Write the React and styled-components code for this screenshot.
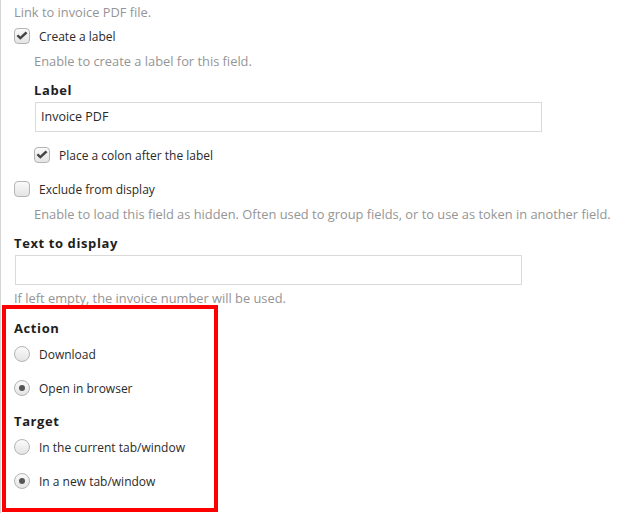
import styled, { createGlobalStyle } from "styled-components";

const GlobalStyle = createGlobalStyle`
	body {
		margin: 0;
		background: #fff;
		font-family: "Open Sans", "Noto Sans", sans-serif;
		font-size: 13px;
		color: #333;
	}
`;

const Panel = styled.div`
	position: relative;
	min-height: 513px;
	border-left: 1px solid #d4d4d4;
	padding: 2px 0 0 13px;
	box-sizing: border-box;
`;

const Help = styled.div`
	line-height: 20px;
	font-size: 12.85px;
	color: #959595;
	margin-top: ${(p) => p.$top || 0}px;
	margin-left: ${(p) => p.$indent || 0}px;
	white-space: nowrap;
`;

const Heading = styled.div`
	line-height: 20px;
	font-weight: 700;
	color: #1e1e1e;
	letter-spacing: 0.6px;
	margin-top: ${(p) => p.$top || 0}px;
`;

const Group = styled.div`
	margin-left: 20px;
`;

const Option = styled.label`
	display: flex;
	align-items: center;
	gap: 9px;
	height: 20px;
	font-size: 12px;
	color: #2a2a2a;
	margin-top: ${(p) => p.$top || 0}px;
`;

const Box = styled.span`
	width: 16px;
	height: 16px;
	box-sizing: border-box;
	border: 1px solid #b4b4b4;
	border-radius: ${(p) => (p.$round ? "50%" : "4px")};
	background: linear-gradient(#fafafa, #e4e4e4);
	display: flex;
	align-items: center;
	justify-content: center;
	flex-shrink: 0;
`;

const Dot = styled.span`
	width: 6px;
	height: 6px;
	border-radius: 50%;
	background: #555;
`;

const TextInput = styled.div`
	margin: 2px 0 0 1px;
	width: 507px;
	height: 30px;
	box-sizing: border-box;
	border: 1px solid #dadada;
	padding: 0 5px;
	line-height: 28px;
	font-size: 12.5px;
	color: #2a2a2a;
`;

const Highlight = styled.div`
	position: absolute;
	left: 1px;
	top: 305px;
	width: 216px;
	height: 207px;
	box-sizing: border-box;
	border: 4px solid #ff0000;
	pointer-events: none;
`;

const Check = ({ checked }) => (
	<Box>
		{checked && (
			<svg width="12" height="10" viewBox="0 0 12 10">
				<path d="M0.5 5 L4.3 8.8 L11.5 2.2 L9.6 0.6 L4.3 5.4 L2.4 3.4 Z" fill="#454545" />
			</svg>
		)}
	</Box>
);

const Radio = ({ checked }) => <Box $round>{checked && <Dot />}</Box>;

const App = () => {
	return (
		<Panel>
			<GlobalStyle />
			<Help>Link to invoice PDF file.</Help>
			<Option $top={4}>
				<Check checked />
				Create a label
			</Option>
			<Group>
				<Help $top={5}>Enable to create a label for this field.</Help>
				<Heading $top={9}>Label</Heading>
				<TextInput>Invoice PDF</TextInput>
				<Option $top={13}>
					<Check checked />
					Place a colon after the label
				</Option>
			</Group>
			<Option $top={14}>
				<Check />
				Exclude from display
			</Option>
			<Help $top={5} $indent={20}>
				Enable to load this field as hidden. Often used to group fields, or to use as token in another field.
			</Help>
			<Heading $top={9}>Text to display</Heading>
			<TextInput />
			<Help $top={3}>If left empty, the invoice number will be used.</Help>
			<Heading $top={10}>Action</Heading>
			<Option $top={6}>
				<Radio />
				Download
			</Option>
			<Option $top={14}>
				<Radio checked />
				Open in browser
			</Option>
			<Heading $top={13}>Target</Heading>
			<Option $top={6}>
				<Radio />
				In the current tab/window
			</Option>
			<Option $top={14}>
				<Radio checked />
				In a new tab/window
			</Option>
			<Highlight />
		</Panel>
	);
};

export default App;
